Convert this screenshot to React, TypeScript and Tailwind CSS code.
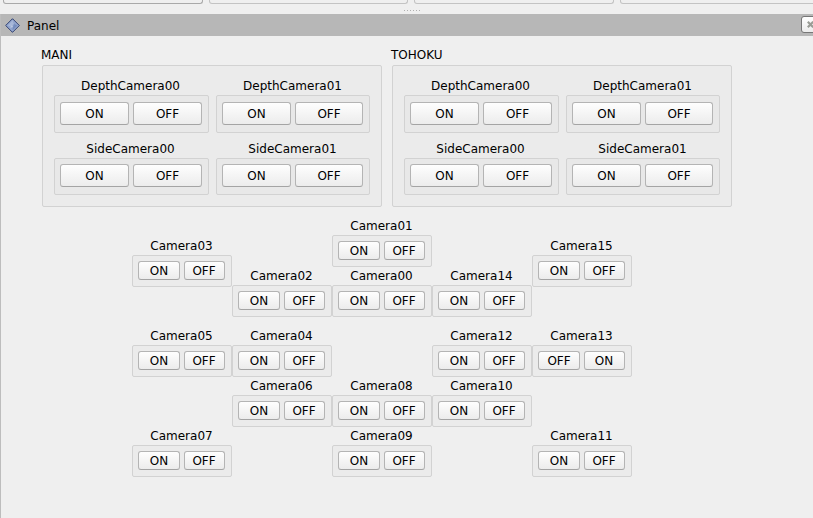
type Size = 'large' | 'small';

function PushButton({ text, className }: { text: string; className: string }) {
  return (
    <button
      className={`flex shrink-0 items-center justify-center rounded-[3px] border border-[#b4b4b4] border-b-[#a4a4a4] bg-linear-to-b from-[#fefefe] to-[#ececec] ${className}`}
    >
      {text}
    </button>
  );
}

function Camera({ name, size = 'small', reversed = false, narrow = false, lower = false }: {
  name: string;
  size?: Size;
  reversed?: boolean;
  narrow?: boolean;
  lower?: boolean;
}) {
  const large = size === 'large';
  const frame = large
    ? `pl-[5px] ${narrow ? 'w-[154px]' : 'w-[155px]'} ${lower ? 'h-[37px] pt-[5px]' : 'h-[38px] pt-[6px]'} bg-[#e8e8e8]`
    : 'h-8 w-[100px] pl-[5px] pt-[5px] bg-[#ebebeb]';
  const first = large ? 'h-[23px] w-[69px]' : 'h-[19px] w-[42px]';
  const second = large ? (narrow ? 'h-[23px] w-[68px]' : 'h-[23px] w-[69px]') : 'h-[19px] w-[41px] pr-px';
  return (
    <div className="flex flex-col">
      <div className={`mb-[2px] h-4 pt-[2px] text-center leading-[14px] ${large && !narrow ? 'pr-[2px]' : 'pr-px'}`}>{name}</div>
      <div className={`flex items-start gap-1 rounded-[2px] border border-[#d2d2d2] ${frame}`}>
        <PushButton text={reversed ? 'OFF' : 'ON'} className={first} />
        <PushButton text={reversed ? 'ON' : 'OFF'} className={second} />
      </div>
    </div>
  );
}

function Group({ title }: { title: string }) {
  return (
    <section className="w-[340px]">
      <h2 className="-ml-px h-[17px] leading-[14px]">{title}</h2>
      <div className="flex h-[142px] gap-[7px] rounded-[2px] border border-[#d2d2d2] bg-[#ebebeb] pt-[11px] pl-[11px]">
        {['00', '01'].map((id) => (
          <div key={id} className="flex flex-col gap-[7px]">
            <Camera name={`DepthCamera${id}`} size="large" narrow={id === '01'} />
            <Camera name={`SideCamera${id}`} size="large" narrow={id === '01'} lower />
          </div>
        ))}
      </div>
    </section>
  );
}

export default function App() {
  return (
    <div className="flex h-[518px] w-[813px] flex-col overflow-hidden bg-[#efefef] font-['DejaVu_Sans',sans-serif] text-[12px] text-black">
      <div className="flex h-1 shrink-0 gap-[6px] pl-[3px]">
        <div className="w-[200px] shrink-0 rounded-b-[3px] border border-t-0 border-[#a9a9a9]" />
        <div className="w-[199px] shrink-0 rounded-b-[3px] border border-t-0 border-[#c3c3c3]" />
        <div className="w-[200px] shrink-0 rounded-b-[3px] border border-t-0 border-[#c3c3c3]" />
        <div className="w-[200px] shrink-0 rounded-b-[3px] border border-t-0 border-[#c3c3c3]" />
      </div>
      <div className="flex h-[10px] shrink-0 gap-[2px] pt-[6px] pl-[404px]">
        {[0, 1, 2, 3, 4, 5].map((dot) => (
          <span key={dot} className="size-px bg-[#b0b0b0]" />
        ))}
      </div>
      <div className="flex min-h-0 flex-1 flex-col border-l border-[#bdbdbd]">
        <header className="flex h-[22px] shrink-0 items-start bg-[#b7b7b7]">
          <svg className="mt-1 ml-1 shrink-0" width="15" height="15" viewBox="0 0 15 15">
            <path d="M7.5 .7 14.3 7.5 7.5 14.3 .7 7.5Z" fill="#8297c2" stroke="#2f3f70" />
            <path d="M7.5 2 13 7.5 7.5 13 2 7.5Z" fill="#8da2cb" stroke="#a9b9db" strokeWidth=".6" />
            <path d="M7.5 2.5 9 6 6 9 3 7.5Z" fill="#a8b8d9" />
            <path d="M9 6 12.5 7.5 7.5 12.5 8 9Z" fill="#768dbd" />
            <path d="M5 10 7 7 8 9Z" fill="#bccae4" />
          </svg>
          <span className="mt-[5px] ml-[7px] leading-[14px]">Panel</span>
          <button className="mt-[2px] -mr-[6px] ml-auto flex h-[17px] w-[18px] shrink-0 items-center rounded-[3px] border border-[#777] bg-linear-to-b from-white to-[#ececec] pl-[5px]">
            <svg width="7" height="7" viewBox="0 0 7 7">
              <path d="M.8 .8 6.2 6.2M6.2 .8 .8 6.2" stroke="#9a9c96" strokeWidth="2.2" />
            </svg>
          </button>
        </header>
        <main className="pt-3 pl-[41px]">
          <div className="flex gap-[10px]">
            <Group title="MANI" />
            <Group title="TOHOKU" />
          </div>
          <div className="mt-[10px] ml-[90px] flex items-start">
            <div className="flex flex-col pt-5">
              <Camera name="Camera03" />
              <div className="h-10" />
              <Camera name="Camera05" />
              <div className="h-[50px]" />
              <Camera name="Camera07" />
            </div>
            <div className="flex flex-col pt-[50px]">
              <Camera name="Camera02" />
              <div className="h-[10px]" />
              <Camera name="Camera04" />
              <Camera name="Camera06" />
            </div>
            <div className="flex flex-col">
              <Camera name="Camera01" />
              <Camera name="Camera00" />
              <div className="h-[60px]" />
              <Camera name="Camera08" />
              <Camera name="Camera09" />
            </div>
            <div className="flex flex-col pt-[50px]">
              <Camera name="Camera14" />
              <div className="h-[10px]" />
              <Camera name="Camera12" />
              <Camera name="Camera10" />
            </div>
            <div className="flex flex-col pt-5">
              <Camera name="Camera15" />
              <div className="h-10" />
              <Camera name="Camera13" reversed />
              <div className="h-[50px]" />
              <Camera name="Camera11" />
            </div>
          </div>
        </main>
      </div>
    </div>
  );
}
